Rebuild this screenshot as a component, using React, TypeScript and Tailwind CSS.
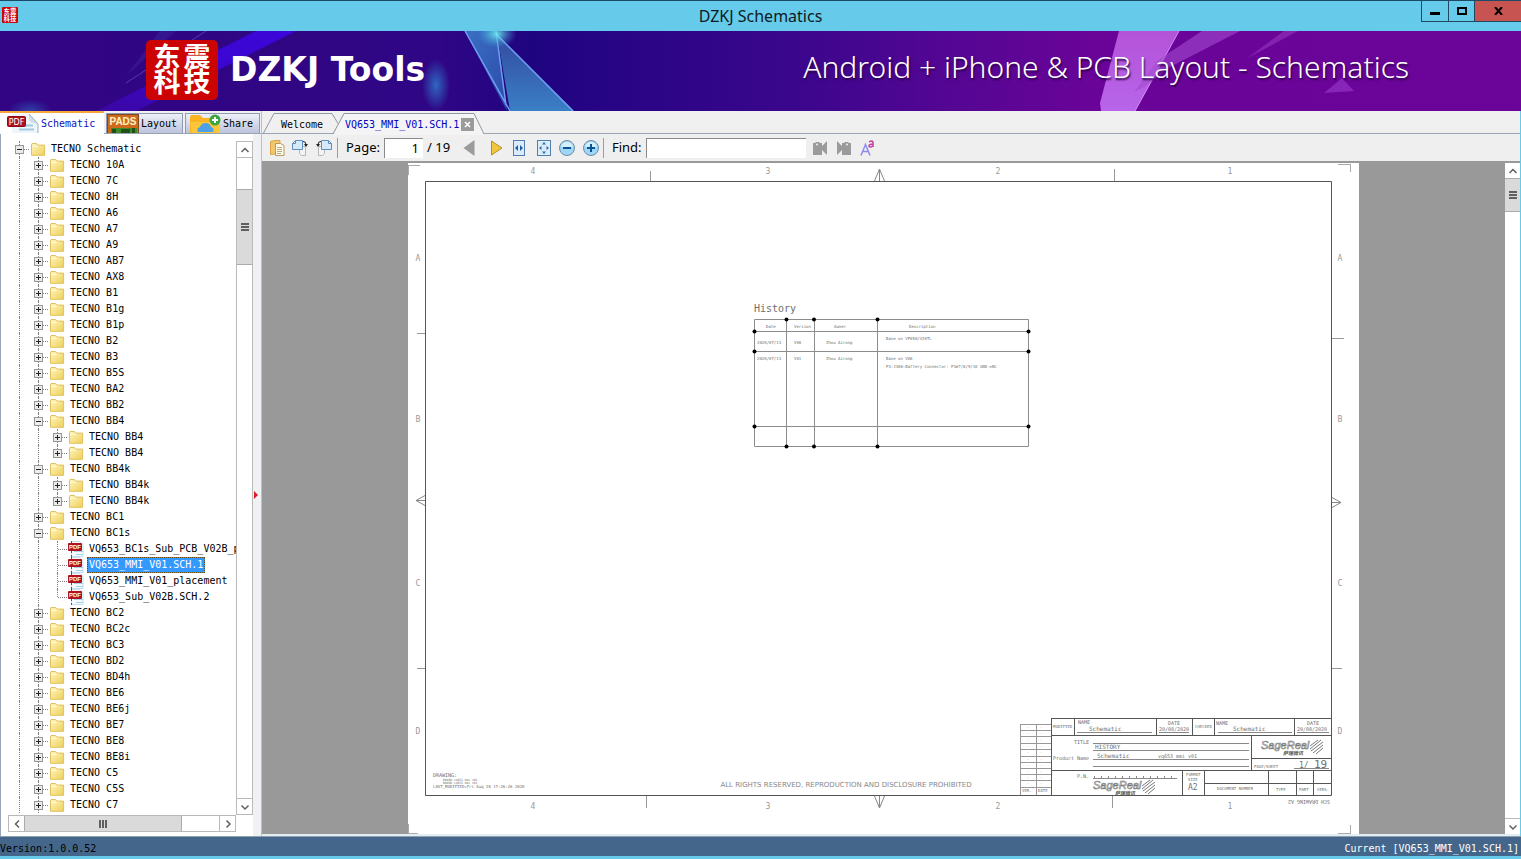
import { useState } from "react";
import clsx from "clsx";

type NodeKind = "folder" | "pdf";

interface TreeNode {
  label: string;
  level: 0 | 1 | 2;
  kind: NodeKind;
  open?: boolean;
  last?: boolean;
}

const folder = (label: string, open = false): TreeNode => ({ label, level: 1, kind: "folder", open });
const sub = (label: string, last = false): TreeNode => ({ label, level: 2, kind: "folder", last });
const pdf = (label: string, last = false): TreeNode => ({ label, level: 2, kind: "pdf", last });

const NODES: TreeNode[] = [
  { label: "TECNO Schematic", level: 0, kind: "folder", open: true },
  folder("TECNO 10A"),
  folder("TECNO 7C"),
  folder("TECNO 8H"),
  folder("TECNO A6"),
  folder("TECNO A7"),
  folder("TECNO A9"),
  folder("TECNO AB7"),
  folder("TECNO AX8"),
  folder("TECNO B1"),
  folder("TECNO B1g"),
  folder("TECNO B1p"),
  folder("TECNO B2"),
  folder("TECNO B3"),
  folder("TECNO B5S"),
  folder("TECNO BA2"),
  folder("TECNO BB2"),
  folder("TECNO BB4", true),
  sub("TECNO BB4"),
  sub("TECNO BB4", true),
  folder("TECNO BB4k", true),
  sub("TECNO BB4k"),
  sub("TECNO BB4k", true),
  folder("TECNO BC1"),
  folder("TECNO BC1s", true),
  pdf("VQ653_BC1s_Sub_PCB_V02B_p"),
  pdf("VQ653_MMI_V01.SCH.1"),
  pdf("VQ653_MMI_V01_placement"),
  pdf("VQ653_Sub_V02B.SCH.2", true),
  folder("TECNO BC2"),
  folder("TECNO BC2c"),
  folder("TECNO BC3"),
  folder("TECNO BD2"),
  folder("TECNO BD4h"),
  folder("TECNO BE6"),
  folder("TECNO BE6j"),
  folder("TECNO BE7"),
  folder("TECNO BE8"),
  folder("TECNO BE8i"),
  folder("TECNO C5"),
  folder("TECNO C5S"),
  folder("TECNO C7"),
];

const MONO = "font-['DejaVu_Sans_Mono','Liberation_Mono',monospace] text-[10px]";
const UI = "font-['Noto_Sans','Open_Sans',sans-serif]";

/* ---------- icons ---------- */

function FolderIcon() {
  return (
    <svg width="15" height="13" viewBox="0 0 15 13" className="shrink-0">
      <defs>
        <linearGradient id="folderFill" x1="0" y1="0" x2="1" y2="1">
          <stop offset="0" stopColor="#fff6bd" />
          <stop offset="1" stopColor="#efcf5c" />
        </linearGradient>
      </defs>
      <path d="M.5 1.2 1 .5h4.6l1.3 1.6h6.7v10.2H.5z" fill="url(#folderFill)" stroke="#e0c05c" />
      <path d="M1.2 3.5h5l1-1" fill="none" stroke="#fffbe0" />
    </svg>
  );
}

function PdfIcon() {
  return (
    <svg width="16" height="16" viewBox="0 0 16 16" className="shrink-0">
      <path d="M3.5 .5h8l3.5 3v12H3.5z" fill="#f4fafd" stroke="#c4e0ec" />
      <path d="M3.5 0v3M3.5 10v2M3.5 14v2" stroke="#555" />
      <path d="M6 10.5h9M8 13.5h7" stroke="#9fd4ea" />
      <rect x="0" y="2" width="14" height="8" rx="1" fill="#b3121d" />
      <text x="7" y="8" fontSize="6" fontWeight="bold" textAnchor="middle" fill="#fff" fontFamily="Liberation Sans">
        PDF
      </text>
    </svg>
  );
}

function SchematicTabIcon() {
  return (
    <svg width="32" height="19" viewBox="0 0 32 19" className="shrink-0">
      <path d="M5 0h17l9 9v10H5z" fill="#eef6fb" />
      <path d="M22 0v5q0 3 4 4l5 1z" fill="#cfdfe8" />
      <path d="m22 0 9 10v9" fill="none" stroke="#98aebb" />
      <path d="M19 11.5h7M12 15.5h15" stroke="#9fcce4" strokeWidth="2" />
      <rect x=".5" y="2.5" width="18" height="10" rx="1" fill="#b0141c" stroke="#8b0b12" />
      <text x="9.5" y="11" fontSize="8" textAnchor="middle" fill="#fff" fontFamily="DejaVu Sans">
        PDF
      </text>
    </svg>
  );
}

function PadsIcon() {
  return (
    <svg width="32" height="19" viewBox="0 0 32 19" className="shrink-0">
      <rect x=".5" y=".5" width="31" height="19" fill="#cf6a1c" stroke="#7c4a20" />
      <rect x="4" y="14" width="26" height="5" fill="#3d8a2d" />
      <path d="M5 15h4v4H5zM14 15h9v4h-9zM25 14h3v5h-3z" fill="#235018" />
      <text x="16" y="11" fontSize="10" fontWeight="bold" textAnchor="middle" fill="#fff3c4" fontFamily="Liberation Sans">
        PADS
      </text>
    </svg>
  );
}

function ShareIcon() {
  return (
    <svg width="32" height="19" viewBox="0 0 32 19" className="shrink-0">
      <path d="M1 3q0-2 2-2h8l3 3h12v15H1z" fill="#fbb321" />
      <path d="M1 8h30v11H3z" fill="#fdc637" />
      <path d="M9 18q-2-4 2-5 1-4 6-4 4 0 5 4 4 1 2 5z" fill="#4ea0e8" />
      <circle cx="26" cy="6" r="5.5" fill="#3aa63f" />
      <path d="M26 3v6M23 6h6" stroke="#fff" strokeWidth="2" />
    </svg>
  );
}

function OpenIcon() {
  return (
    <svg width="15" height="16" viewBox="0 0 15 16">
      <path d="M.5 1.5 5 .5h5v13l-9.500 1z" fill="#f2c76a" stroke="#d9a548" />
      <path d="M5.500 3.500h5l3.500 2v10h-8.500z" fill="#fffbea" stroke="#b79b63" />
      <path d="M7 7.5h5M7 9.5h5M7 11.5h5M7 13.5h4" stroke="#b9a98a" />
    </svg>
  );
}

function RotateIcon({ flip = false }: { flip?: boolean }) {
  return (
    <svg width="18" height="16" viewBox="0 0 18 16" className={clsx(flip && "-scale-x-100")}>
      <path d="M8.500 6.500h6v9h-4l-2-2z" fill="#f3f3f3" stroke="#b8b8b8" />
      <path d="M4.500 .5h7v9h-10v-6z" fill="#d5e9fa" stroke="#5e8fbd" />
      <path d="M1.500 3.500h3v-3" fill="none" stroke="#5e8fbd" />
      <path d="M12 1.500q3 0 3 3" fill="none" stroke="#222" />
      <path d="M13 4h4l-2 3z" fill="#222" />
    </svg>
  );
}

function FitIcon({ page = false }: { page?: boolean }) {
  return (
    <svg width={page ? 14 : 12} height="16" viewBox={page ? "0 0 14 16" : "0 0 12 16"}>
      <rect x=".5" y=".5" width={page ? 13 : 11} height="15" fill="#dcebf9" stroke="#4f7fb2" />
      {page ? (
        <path d="M7 2 9 4.500H5zM7 14 9 11.500H5zM2 8l2.500-2v4zM12 8 9.500 6v4z" fill="#2f69ab" />
      ) : (
        <path d="M2 8l3-3v6zM10 8 7 5v6z" fill="#1f5c9f" />
      )}
    </svg>
  );
}

function ZoomIcon({ plus = false }: { plus?: boolean }) {
  return (
    <svg width="16" height="16" viewBox="0 0 16 16">
      <circle cx="8" cy="8" r="7.5" fill="#9dd6f7" stroke="#6d8ea8" />
      <path d="M2 7q1-5 6-5t6 5z" fill="#d3eefc" />
      <path d={plus ? "M4 8h8M8 4v8" : "M4 8h8"} stroke="#0c5391" strokeWidth="2" />
    </svg>
  );
}

function FindIcon({ next = false }: { next?: boolean }) {
  return (
    <svg width="16" height="16" viewBox="0 0 16 16" className={clsx(next && "-scale-x-100")}>
      <path d="M1 3h2l1-1h3l1 1h2v3l5-5v14l-5-5v5H1z" fill="#9b9b9b" />
      <circle cx="5" cy="4.500" r="1" fill="#ececec" />
    </svg>
  );
}

function BrandMark({ className }: { className?: string }) {
  return (
    <svg viewBox="0 0 72 60" className={className} preserveAspectRatio="none" overflow="visible">
      <rect width="72" height="60" rx="5" fill="#cc0303" />
      <g fill="#fff" fontSize="27" fontWeight="bold" textAnchor="middle" fontFamily="'Noto Sans CJK SC', sans-serif">
        <text x="21" y="27">东</text>
        <text x="51" y="27">震</text>
        <text x="21" y="52">科</text>
        <text x="51" y="52">技</text>
      </g>
    </svg>
  );
}

/* ---------- window chrome ---------- */

function TitleBar() {
  return (
    <header className="relative flex h-[31px] shrink-0 items-center justify-center border-t border-[#1b4a66] bg-[#66cbea]">
      <BrandMark className="absolute top-1.5 left-0.5 size-4" />
      <h1 className={clsx(UI, "text-base leading-6 text-[#0d1a22]")}>DZKJ Schematics</h1>
      <div className="absolute top-0 right-0 flex h-[21px] border-b border-l border-[#1d4a5e]">
        <button aria-label="Minimize" className="flex w-[27px] items-center justify-center border-r border-[#1d4a5e]">
          <span className="mt-1 h-[3px] w-2.5 bg-black" />
        </button>
        <button aria-label="Maximize" className="flex w-[26px] items-center justify-center border-r border-[#1d4a5e]">
          <span className="h-2 w-2.5 border-2 border-black" />
        </button>
        <button aria-label="Close" className="flex w-[46px] items-center justify-center bg-[#c75450]">
          <svg width="9" height="8" viewBox="0 0 9 8">
            <path d="m1 0 7 8M8 0 1 8" stroke="#000" strokeWidth="2" />
          </svg>
        </button>
      </div>
    </header>
  );
}

function BannerArt() {
  return (
    <svg className="absolute inset-0 size-full" viewBox="0 0 1521 80" preserveAspectRatio="none">
      <defs>
        <linearGradient id="bannerBase">
          <stop offset="0" stopColor="#310583" />
          <stop offset="0.29" stopColor="#2f0685" />
          <stop offset="0.35" stopColor="#1f0480" />
          <stop offset="0.42" stopColor="#2a0586" />
          <stop offset="0.52" stopColor="#3a068c" />
          <stop offset="0.62" stopColor="#530693" />
          <stop offset="0.72" stopColor="#6a0499" />
          <stop offset="1" stopColor="#6b0499" />
        </linearGradient>
        <linearGradient id="bannerCyan" x1="0" y1="0" x2="1" y2="1">
          <stop offset="0" stopColor="#3a6fc4" />
          <stop offset="1" stopColor="#2c4aa8" />
        </linearGradient>
        <linearGradient id="bannerTeal" x1="0" y1="0" x2="0" y2="1">
          <stop offset="0" stopColor="#33499f" />
          <stop offset="1" stopColor="#3a7fc6" />
        </linearGradient>
        <linearGradient id="bannerPink" x1="0" y1="0" x2="0" y2="1">
          <stop offset="0" stopColor="#b453d8" />
          <stop offset="1" stopColor="#b765ea" />
        </linearGradient>
        <linearGradient id="bannerBeam" x1="1" y1="0" x2="0" y2="1">
          <stop offset="0" stopColor="#3b06d8" />
          <stop offset="0.5" stopColor="#3c06d0" />
          <stop offset="1" stopColor="#3a07a0" />
        </linearGradient>
        <radialGradient id="bannerGlow">
          <stop offset="0" stopColor="#2f7fd0" stopOpacity="0.8" />
          <stop offset="1" stopColor="#2f7fd0" stopOpacity="0" />
        </radialGradient>
        <radialGradient id="bannerSpark">
          <stop offset="0" stopColor="#6ff0f0" stopOpacity="0.9" />
          <stop offset="1" stopColor="#3a9fd8" stopOpacity="0" />
        </radialGradient>
      </defs>
      <rect width="1521" height="80" fill="url(#bannerBase)" />
      <path d="M256 0h40L136 80H96z" fill="url(#bannerBeam)" />
      <path d="M160 0h16l-50 45z" fill="#3f2aa5" opacity="0.4" />
      <path d="m206 0-80 52" stroke="#6a5fd0" opacity="0.6" />
      <ellipse cx="436" cy="54" rx="14" ry="26" fill="url(#bannerGlow)" />
      <ellipse cx="30" cy="80" rx="22" ry="12" fill="url(#bannerGlow)" opacity="0.6" />
      <path d="M465 0h32l10 80z" fill="url(#bannerCyan)" />
      <path d="m497 3 77 77h-64z" fill="url(#bannerTeal)" />
      <path d="m465 0 45 80M496 0l10 74M497 4l76 76" fill="none" stroke="#6f9df0" strokeWidth="1.5" />
      <ellipse cx="497" cy="3" rx="20" ry="14" fill="url(#bannerSpark)" />
      <path d="M1119 0h60l-44 80h-34l-1-8z" fill="url(#bannerPink)" />
      <path d="m1179 0-44 80" stroke="#d58cf5" />
      <path d="M1202 0h38l-70 36-26 20-10 5 24-32z" fill="#a34bcf" opacity="0.6" />
      <path d="M1284 0h14l-52 28z" fill="#9a3fc4" opacity="0.5" />
      <path d="m1324 62 18-15 12 13z" fill="#9433c4" opacity="0.7" />
    </svg>
  );
}

function Banner() {
  return (
    <section className="relative flex h-20 shrink-0 items-center overflow-hidden pl-[146px] text-white">
      <BannerArt />
      <BrandMark className="relative mb-0.5 h-[60px] w-[72px]" />
      <p className="relative mb-0.5 ml-3 font-['DejaVu_Sans',sans-serif] text-[33px] leading-10 font-bold">
        DZKJ Tools
      </p>
      <p className={clsx(UI, "relative mr-28 mb-2 ml-auto text-[30px] leading-10 font-light [text-shadow:1px_2px_2px_#2c0048]")}>
        Android + iPhone &amp; PCB Layout - Schematics
      </p>
    </section>
  );
}

/* ---------- left side ---------- */

function SideTabs() {
  const tab = "flex items-center border border-b-0 border-[#8f9bb0] bg-linear-to-b from-[#eef0f8] to-[#bcc3dd]";
  return (
    <div role="tablist" className={clsx(MONO, "flex h-[23px] items-end gap-0.5 border-b border-[#98a6b5] bg-[#f0f0f0]")}>
      <button
        role="tab"
        aria-selected="true"
        className="-mb-px flex h-[23px] w-[104px] items-center gap-0.5 border-t-2 border-[#f5a738] bg-white pl-[7px] text-[#1010c0]"
      >
        <SchematicTabIcon />
        Schematic
      </button>
      <button role="tab" aria-selected="false" className={clsx(tab, "h-5 w-[77px] gap-0.5")}>
        <PadsIcon />
        Layout
      </button>
      <button role="tab" aria-selected="false" className={clsx(tab, "h-5 w-[75px] gap-0.5 pl-[3px]")}>
        <ShareIcon />
        Share
      </button>
    </div>
  );
}

function Guide({ half = false }: { half?: boolean }) {
  return (
    <span
      className={clsx(
        "absolute top-0 left-[9px] border-l border-dotted border-[#808080]",
        half ? "h-2" : "h-4"
      )}
    />
  );
}

function TreeRow({ node, selected, onSelect }: { node: TreeNode; selected: boolean; onSelect: () => void }) {
  const indents = Array.from({ length: node.level });
  return (
    <li role="treeitem" aria-selected={selected} className="flex h-4 items-center">
      {indents.map((_, i) => (
        <span key={i} className="relative h-4 w-[19px] shrink-0">
          <Guide />
        </span>
      ))}
      <span className="relative flex h-4 w-[19px] shrink-0 items-center justify-center">
        <Guide half={node.last} />
        <span className="absolute top-2 left-2.5 w-[9px] border-t border-dotted border-[#808080]" />
        {node.kind === "folder" && (
          <button
            aria-label={node.open ? "Collapse" : "Expand"}
            className="relative size-[9px] border border-[#979797] bg-[#ebebeb]"
          >
            <span className="absolute top-[3px] left-px h-px w-[5px] bg-[#222]" />
            {!node.open && <span className="absolute top-px left-[3px] h-[5px] w-px bg-[#222]" />}
          </button>
        )}
      </span>
      <button onClick={onSelect} className="flex h-4 items-center whitespace-nowrap">
        <span className={clsx("flex w-5", node.kind === "folder" ? "pl-0.5" : "pl-px")}>
          {node.kind === "folder" ? <FolderIcon /> : <PdfIcon />}
        </span>
        <span
          className={clsx(
            "h-4 px-0.5 leading-4",
            selected && "bg-[#3399ff] text-white outline-1 -outline-offset-1 outline-dotted outline-[#6b4a10]"
          )}
        >
          {node.label}
        </span>
      </button>
    </li>
  );
}

const CHEVRONS = {
  up: "M1.5 7 5 3.5 8.5 7",
  down: "M1.5 3.5 5 7l3.5-3.5",
  left: "M7 1.5 3.5 5 7 8.5",
  right: "M3.5 1.5 7 5 3.5 8.5",
};

function ScrollButton({ dir }: { dir: keyof typeof CHEVRONS }) {
  return (
    <button aria-label={`Scroll ${dir}`} className="flex size-[15px] shrink-0 items-center justify-center bg-white">
      <svg width="10" height="10" viewBox="0 0 10 10">
        <path d={CHEVRONS[dir]} fill="none" stroke="#606060" strokeWidth="1.5" />
      </svg>
    </button>
  );
}

function SidePanel() {
  const [selected, setSelected] = useState(26);

  return (
    <aside className="flex w-[253px] shrink-0 flex-col border-l border-[#98a6b5] bg-white pt-[7px] pb-1 pl-[7px]">
      <div className="flex min-h-0 flex-1">
        <ul role="tree" aria-label="Schematics" className={clsx(MONO, "min-w-0 flex-1 overflow-hidden pl-0.5 text-black")}>
          {NODES.map((node, i) => (
            <TreeRow key={i} node={node} selected={selected === i} onSelect={() => setSelected(i)} />
          ))}
        </ul>
        <div className="flex w-[17px] shrink-0 flex-col border border-[#bababa] bg-white">
          <ScrollButton dir="up" />
          <div className="h-8 border-t border-[#bababa]" />
          <div className="flex h-[76px] flex-col items-center justify-center gap-px border-y border-[#ababab] bg-[#dadada]">
            <span className="h-0.5 w-2 bg-[#606060]" />
            <span className="h-0.5 w-2 bg-[#606060]" />
            <span className="h-0.5 w-2 bg-[#606060]" />
          </div>
          <div className="flex-1 border-b border-[#bababa]" />
          <ScrollButton dir="down" />
        </div>
      </div>
      <div className="mr-[17px] flex h-[17px] shrink-0 border border-[#bababa]">
        <ScrollButton dir="left" />
        <div className="flex w-[158px] items-center justify-center gap-px border-x border-[#ababab] bg-[#dadada]">
          <span className="h-2 w-0.5 bg-[#606060]" />
          <span className="h-2 w-0.5 bg-[#606060]" />
          <span className="h-2 w-0.5 bg-[#606060]" />
        </div>
        <div className="flex-1 border-r border-[#bababa]" />
        <ScrollButton dir="right" />
      </div>
    </aside>
  );
}

/* ---------- document area ---------- */

function DocumentTabs() {
  return (
    <div role="tablist" className={clsx(MONO, "relative flex h-[23px] border-b border-[#98a6b5] bg-[#f0f0f0] pl-[19px]")}>
      <svg className="absolute top-0 left-0" width="222" height="24" viewBox="0 0 222 24">
        <path d="m1 23 11-20.500h58l6 10" fill="none" stroke="#8c98a4" />
        <path d="M71 24 82 2.500h130l10 21.500z" fill="#f4f4f4" />
        <path d="M71 23 82 2.500h130l10 20.500" fill="none" stroke="#8c98a4" />
      </svg>
      <button role="tab" aria-selected="false" className="relative mt-1 h-[18px] w-16 text-left text-black">
        Welcome
      </button>
      <button role="tab" aria-selected="true" className="relative mt-1 h-[18px] text-[#0000c8]">
        VQ653_MMI_V01.SCH.1
      </button>
      <button
        aria-label="Close document"
        className="relative mt-[7px] ml-0.5 flex size-[13px] items-center justify-center bg-[#9b9b9b]"
      >
        <svg width="7" height="7" viewBox="0 0 7 7">
          <path d="m1 1 5 5M6 1 1 6" stroke="#fff" strokeWidth="1.5" />
        </svg>
      </button>
    </div>
  );
}

function Toolbar() {
  const [page, setPage] = useState("1");
  const [query, setQuery] = useState("");
  const box = "h-5 border-t border-l border-[#8a8a8a] bg-white text-[13px] outline-none";

  return (
    <div className={clsx(UI, "flex h-[29px] shrink-0 items-center border-b-2 border-[#999] bg-[#efefef] pl-2 text-[13px] text-black")}>
      <button aria-label="Open"><OpenIcon /></button>
      <button aria-label="Rotate right" className="ml-1.5"><RotateIcon /></button>
      <button aria-label="Rotate left" className="ml-1.5"><RotateIcon flip /></button>
      <span className="mx-1 h-5 w-px bg-[#9c9c9c]" />
      <label htmlFor="page" className="ml-1">Page:</label>
      <input
        id="page"
        value={page}
        onChange={(e) => setPage(e.target.value)}
        className={clsx(box, "ml-1 w-[39px] pr-1 text-right")}
      />
      <span className="ml-1 w-6 whitespace-nowrap">/ 19</span>
      <button aria-label="Previous page" className="ml-3">
        <svg width="12" height="16" viewBox="0 0 12 16"><path d="M11.500 0v16L.5 8z" fill="#9b9b9b" /></svg>
      </button>
      <button aria-label="Next page" className="ml-4">
        <svg width="12" height="16" viewBox="0 0 12 16">
          <path d="M.5 1v14L11 8z" fill="#f1c63e" stroke="#b98f24" />
        </svg>
      </button>
      <button aria-label="Fit width" className="ml-2.5"><FitIcon /></button>
      <button aria-label="Fit page" className="ml-3"><FitIcon page /></button>
      <button aria-label="Zoom out" className="ml-2"><ZoomIcon /></button>
      <button aria-label="Zoom in" className="ml-2"><ZoomIcon plus /></button>
      <span className="mx-1 h-5 w-px bg-[#9c9c9c]" />
      <label htmlFor="find" className="ml-1">Find:</label>
      <input
        id="find"
        value={query}
        onChange={(e) => setQuery(e.target.value)}
        className={clsx(box, "ml-1 w-40 px-1")}
      />
      <button aria-label="Find previous" className="ml-1.5"><FindIcon /></button>
      <button aria-label="Find next" className="ml-2"><FindIcon next /></button>
      <button aria-label="Match case" className="ml-2">
        <svg width="16" height="18" viewBox="0 0 16 18">
          <path d="m1 16.500 4.500-11 4.500 11M2.500 12.500h6" fill="none" stroke="#8d8df0" strokeWidth="1.5" />
          <path d="M9 3q3-2 4 0v5M13 5q-4 0-4 2t4 0" fill="none" stroke="#c8409c" strokeWidth="1.5" />
        </svg>
      </button>
    </div>
  );
}

/* ---------- the drawing sheet ---------- */

interface NoteProps {
  x: number;
  y: number;
  size?: number;
  mid?: boolean;
  children: string;
}

function Note({ x, y, size = 4, mid, children }: NoteProps) {
  return (
    <text x={x} y={y} fontSize={size} textAnchor={mid ? "middle" : "start"}>
      {children}
    </text>
  );
}

const ZONES = [
  { x: 533, label: "4" },
  { x: 768, label: "3" },
  { x: 998, label: "2" },
  { x: 1230, label: "1" },
];

const SIDE_ZONES = [
  { y: 261, label: "A" },
  { y: 422, label: "B" },
  { y: 586, label: "C" },
  { y: 734, label: "D" },
];

const REVISION_ROWS = [724, 730, 736, 743, 749, 756, 762, 768, 774, 780, 787];

const DOTS = [
  [786.5, 319.5], [814, 319.5], [877.5, 319.5],
  [786.5, 446.5], [814, 446.5], [877.5, 446.5],
  [754.5, 331.5], [754.5, 351.5], [754.5, 426.5],
  [1028.5, 331.5], [1028.5, 351.5], [1028.5, 426.5],
];

function SageReal({ x, y }: { x: number; y: number }) {
  return (
    <g transform={`translate(${x} ${y})`}>
      <text x="0" y="9" fontSize="11" fontStyle="italic" fill="#fff" stroke="#777" strokeWidth="0.6" fontFamily="Liberation Sans">
        SageReal
      </text>
      <text x="22" y="15" fontSize="5" fontWeight="bold" fontStyle="italic" fill="#555" fontFamily="'Noto Sans CJK SC'">
        萨瑞微讯
      </text>
      <path d="m49 6 8-6M49 9l11-9M50 11l12-9M52 13l10-8M55 14l7-6" stroke="#777" />
    </g>
  );
}

function HistoryBlock() {
  return (
    <g>
      <Note x={754} y={312} size={10}>History</Note>
      <path
        d="M754.500 319.500h274v127h-274zM754 331.500h275M754 351.500h275M754 426.500h275M786.500 319v128M814.500 319v128M877.500 319v128"
        fill="none"
        stroke="#8c8c8c"
      />
      {DOTS.map(([cx, cy]) => (
        <circle key={`${cx}-${cy}`} cx={cx} cy={cy} r="2" fill="#000" />
      ))}
      <Note x={766} y={328}>Date</Note>
      <Note x={794} y={328}>Version</Note>
      <Note x={834} y={328}>Owner</Note>
      <Note x={909} y={328}>Description</Note>
      <Note x={757} y={344}>2020/07/13</Note>
      <Note x={794} y={344}>V00</Note>
      <Note x={826} y={344}>Zhou Airong</Note>
      <Note x={886} y={340}>Base on VP650/V20TL</Note>
      <Note x={757} y={360}>2020/07/13</Note>
      <Note x={794} y={360}>V01</Note>
      <Note x={826} y={360}>Zhou Airong</Note>
      <Note x={886} y={360}>Base on V00</Note>
      <Note x={886} y={368}>P3:J300:Battery Connector: P3#7/8/9/10 GND-&gt;NC</Note>
    </g>
  );
}

function TitleBlock() {
  return (
    <g>
      {/* revision list */}
      <path
        d={`M1020.500 724v71M1036.500 724v71${REVISION_ROWS.map((y) => `M1020 ${y + 0.5}h31`).join("")}`}
        stroke="#999"
      />
      {REVISION_ROWS.slice(0, 10).map((y) => (
        <g key={y}>
          <Note x={1027} y={y + 5}>-</Note>
          <Note x={1040} y={y + 5}>-</Note>
        </g>
      ))}
      <Note x={1022} y={792}>VER.</Note>
      <Note x={1038} y={792}>DATE</Note>

      <path
        d="M1051 718.500h280M1051.500 718v77M1051 735.500h280M1051 770.500h280M1074.500 718v17M1156.500 718v17M1192.500 718v17M1214.500 718v17M1294.500 718v17M1251.500 735v35M1251 758.500h80M1182.500 770v25M1204.500 770v25M1204 783.500h127M1268.500 770v25M1296.500 770v25M1313.500 770v25"
        stroke="#555"
      />
      <path
        d="M1077 732.500h75M1159 732.500h30M1218 732.500h74M1297 732.500h32M1093 743.500h156M1093 750.500h156M1093 759.500h156M1093 766.500h156M1294 768.500h35M1093 778.500h84"
        stroke="#888"
      />
      <path d="M1094 777h83" stroke="#888" strokeWidth="2" strokeDasharray="1 6" />

      <Note x={1053} y={728}>MODIFIED</Note>
      <Note x={1078} y={724} size={5}>NAME</Note>
      <Note x={1089} y={731} size={6}>Schematic</Note>
      <Note x={1168} y={725} size={5}>DATE</Note>
      <Note x={1159} y={731} size={5}>20/08/2020</Note>
      <Note x={1195} y={728}>CHECKED</Note>
      <Note x={1216} y={725} size={5}>NAME</Note>
      <Note x={1233} y={731} size={6}>Schematic</Note>
      <Note x={1307} y={725} size={5}>DATE</Note>
      <Note x={1297} y={731} size={5}>20/08/2020</Note>

      <Note x={1074} y={744} size={5}>TITLE</Note>
      <Note x={1095} y={749} size={6}>HISTORY</Note>
      <Note x={1053} y={760} size={5}>Product Name</Note>
      <Note x={1097} y={758} size={6}>Schematic</Note>
      <Note x={1158} y={758} size={5}>vq653_mmi_v01</Note>
      <Note x={1254} y={768}>PAGE/SHEET</Note>
      <Note x={1299} y={768} size={8}>1/</Note>
      <Note x={1314} y={768} size={11}>19</Note>
      <SageReal x={1261} y={740} />

      <Note x={1077} y={778} size={5}>P.N.</Note>
      <SageReal x={1093} y={780} />
      <Note x={1186} y={776}>FORMAT</Note>
      <Note x={1188} y={781}>SIZE</Note>
      <Note x={1188} y={790} size={8}>A2</Note>
      <Note x={1217} y={790}>DOCUMENT NUMBER</Note>
      <Note x={1276} y={791}>TYPE</Note>
      <Note x={1299} y={791}>PART</Note>
      <Note x={1317} y={791}>VERS.</Note>
      <g transform="rotate(180 1309 802)">
        <Note x={1309} y={804} size={5} mid>SCH DRAWING A2</Note>
      </g>
    </g>
  );
}

function Sheet() {
  return (
    <svg
      width="951"
      height="671"
      viewBox="408 163 951 671"
      className="mx-auto block bg-white"
      fill="#6f6f6f"
      fontFamily="'DejaVu Sans Mono', monospace"
    >
      <g fill="none">
        <path d="M425.500 181.500h906v614h-906z" stroke="#555" />
        <path
          d="M408 165.500h12M408.500 165v10M1338 164.500h13M1350.500 164v8M408.500 824v10M408 833.500h10M1350.500 825v9M1338 833.500h13"
          stroke="#aaa"
        />
        <path
          d="M650.500 171v10M1114.500 169v12M646.500 796v12M1112.500 796v12M417 333.500h8M417 668.500h8M1332 338.500h12M1332 668.500h10"
          stroke="#999"
        />
        <path
          d="M874.500 181l5-12 5 12M879.500 169v12M874.500 796l5 12 5-12M879.500 796v12M425 495.500l-9 5 9 5M416 500.500h9M1332 497.500l9 5-9 5M1332 502.500h9"
          stroke="#888"
        />
      </g>
      {ZONES.map((z) => (
        <g key={z.label} fill="#999">
          <Note x={z.x} y={174} size={8} mid>{z.label}</Note>
          <Note x={z.x} y={809} size={8} mid>{z.label}</Note>
        </g>
      ))}
      {SIDE_ZONES.map((z) => (
        <g key={z.label} fill="#999">
          <Note x={418} y={z.y} size={8} mid>{z.label}</Note>
          <Note x={1340} y={z.y} size={8} mid>{z.label}</Note>
        </g>
      ))}
      <HistoryBlock />
      <Note x={433} y={777} size={5}>DRAWING:</Note>
      <Note x={443} y={781} size={3}>BOARD vq653 mmi v01</Note>
      <Note x={443} y={784} size={3}>BOARD vq653 mmi v01</Note>
      <Note x={433} y={788}>LAST_MODIFIED=Fri Aug 28 17:26:26 2020</Note>
      <g fontFamily="'DejaVu Sans', sans-serif" fill="#888">
        <Note x={846} y={787} size={7} mid>ALL RIGHTS RESERVED, REPRODUCTION AND DISCLOSURE PROHIBITED</Note>
      </g>
      <TitleBlock />
    </svg>
  );
}

function Viewer() {
  return (
    <div className="flex min-h-0 flex-1">
      <div className="min-w-0 flex-1 overflow-hidden bg-[#999]">
        <Sheet />
      </div>
      <div className="flex w-[15px] shrink-0 flex-col bg-white">
        <ScrollButton dir="up" />
        <div className="flex h-[34px] flex-col items-center justify-center gap-px border-y border-[#ababab] bg-[#dadada]">
          <span className="h-0.5 w-2 bg-[#606060]" />
          <span className="h-0.5 w-2 bg-[#606060]" />
          <span className="h-0.5 w-2 bg-[#606060]" />
        </div>
        <div className="flex-1 border-b border-[#bababa]" />
        <ScrollButton dir="down" />
      </div>
    </div>
  );
}

export default function App() {
  return (
    <div className="flex h-screen flex-col overflow-hidden border-b-[3px] border-[#66cbea] bg-[#f0f0f0]">
      <TitleBar />
      <Banner />
      <main className="flex min-h-0 flex-1 border-r border-[#66cbea]">
        <div className="flex w-[261px] shrink-0 flex-col">
          <SideTabs />
          <div className="flex min-h-0 flex-1">
            <SidePanel />
            <div className="flex w-2 shrink-0 items-center bg-[#eff1f5]">
              <svg width="6" height="10" viewBox="0 0 6 10" className="mb-[-20px]">
                <path d="M1 1v8l4-4z" fill="#d81e28" />
              </svg>
            </div>
          </div>
        </div>
        <div className="flex min-w-0 flex-1 flex-col border-l border-[#b8c0c8]">
          <DocumentTabs />
          <Toolbar />
          <Viewer />
          <div className="h-0.5 shrink-0 bg-[#e6eef5]" />
        </div>
      </main>
      <footer className={clsx(MONO, "flex h-5 shrink-0 items-center justify-between border-t border-[#8fa0ae] bg-[#44668a] pt-1 pr-0.5")}>
        <span className="text-black">Version:1.0.0.52</span>
        <span className="text-white">Current [VQ653_MMI_V01.SCH.1]</span>
      </footer>
    </div>
  );
}
